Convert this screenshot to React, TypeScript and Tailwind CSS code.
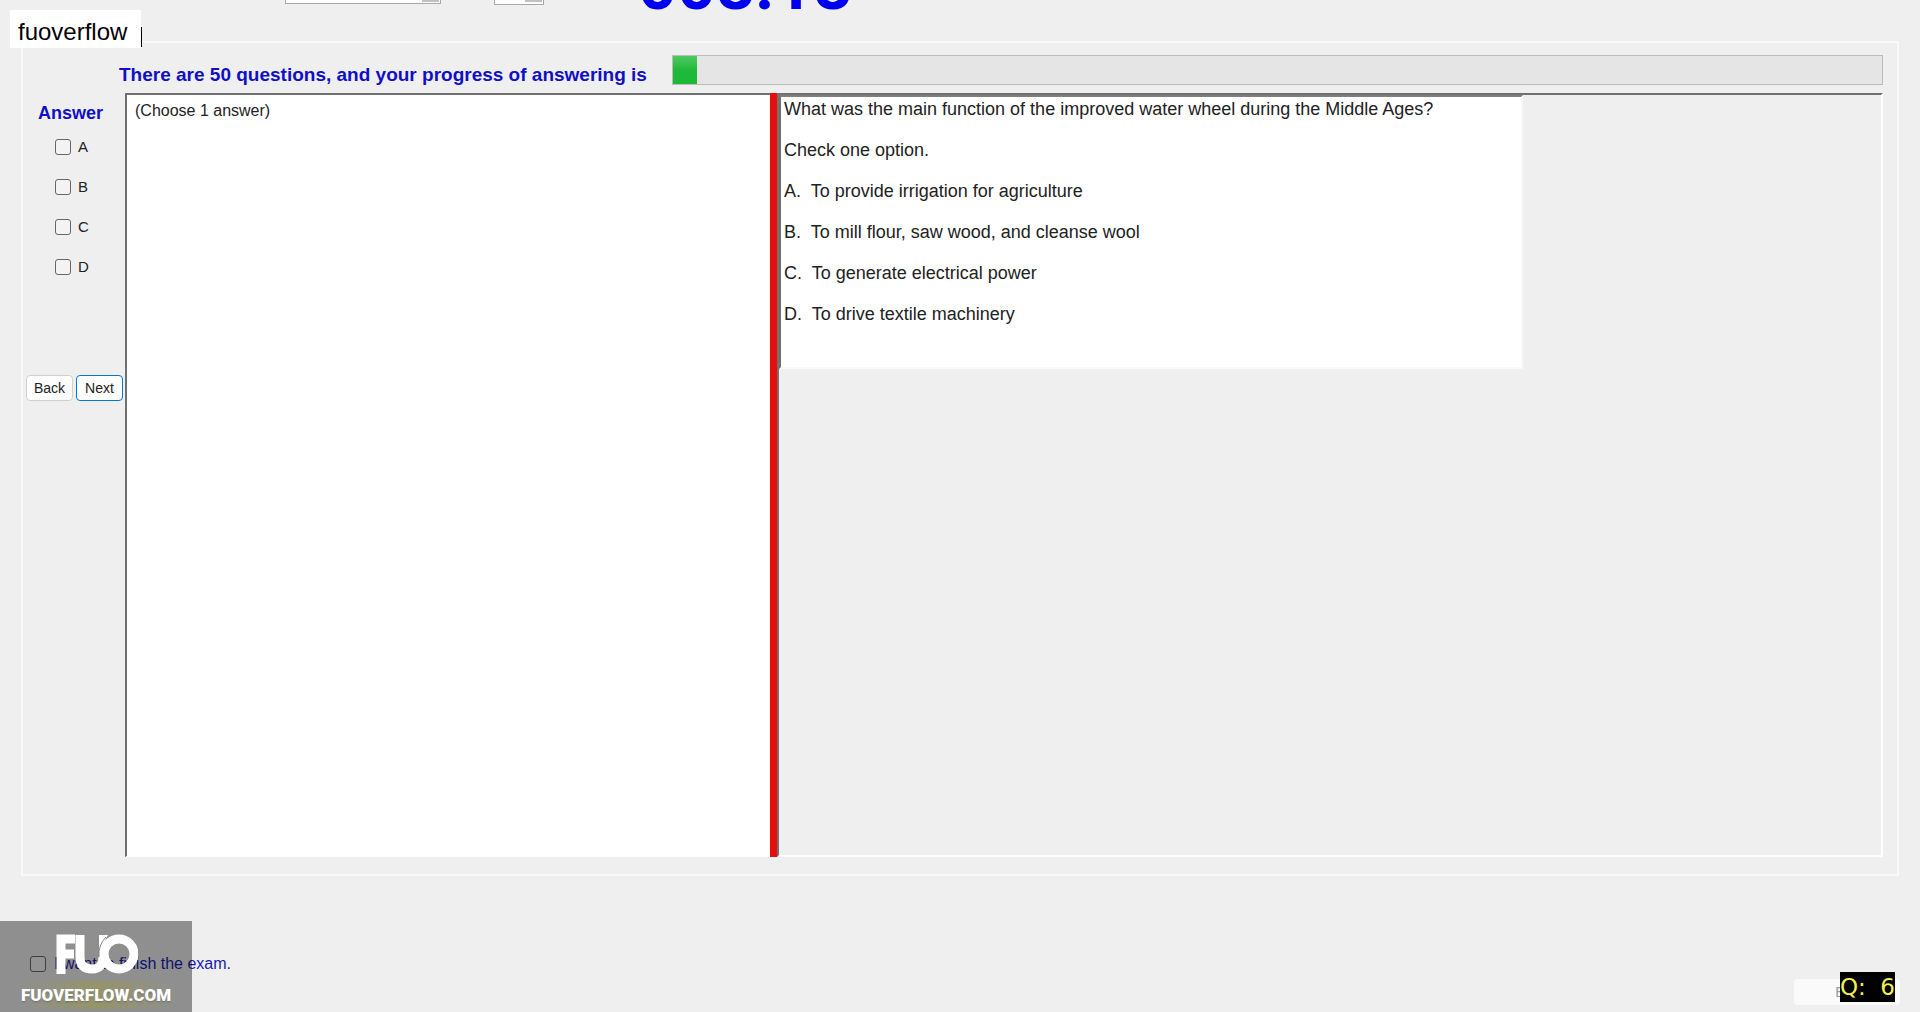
import { useState } from "react";

const options = ["A", "B", "C", "D"];

const questionLines = [
  "What was the main function of the improved water wheel during the Middle Ages?",
  "Check one option.",
  "A.  To provide irrigation for agriculture",
  "B.  To mill flour, saw wood, and cleanse wool",
  "C.  To generate electrical power",
  "D.  To drive textile machinery",
];

function Checkbox({ id, checked, onChange }: { id: string; checked: boolean; onChange: () => void }) {
  return (
    <input
      id={id}
      type="checkbox"
      checked={checked}
      onChange={onChange}
      className="size-4 appearance-none rounded-[3px] border border-[#666] bg-[#f3f3f3] checked:bg-[#0067c0]"
    />
  );
}

function Watermark() {
  return (
    <div className="absolute bottom-0 left-0 flex h-[91px] w-48 flex-col items-center bg-black/40 pt-3 text-white">
      <svg className="h-11 w-[84px]" viewBox="0 0 84 44" fill="none" stroke="#fff" aria-label="FUO">
        <path d="M7 41V6H21M7 21H20" strokeWidth="9" />
        <path d="M26 2V24Q26 36 38 36Q49 36 49 24" strokeWidth="9" />
        <path d="M46 2H54Q50 8 49 16V24H45V2Z" fill="#fff" stroke="none" />
        <circle cx="65" cy="21" r="15" strokeWidth="9" />
        <path d="M52 4Q44 12 45 24" stroke="#888" strokeWidth="1" />
      </svg>
      <div className="mt-1 flex h-7 items-center bg-linear-to-r from-transparent via-[#a09b30]/40 to-transparent">
        <span className="font-['Roboto',sans-serif] text-[17px] leading-6 font-black text-shadow-sm">FUOVERFLOW.COM</span>
      </div>
    </div>
  );
}

export default function App() {
  const [answer, setAnswer] = useState("");
  const [finish, setFinish] = useState(false);

  return (
    <main className="relative flex h-screen flex-col overflow-hidden bg-[#efefef] font-['Liberation_Sans',sans-serif] text-[#222]">
      {/* Top strip, scrolled mostly out of view */}
      <header className="flex h-[41px] shrink-0 items-start pl-[285px]">
        <div className="relative flex">
          <select aria-label="Font" className="h-1 w-[156px] appearance-none border border-t-0 border-[#aaa] bg-white" />
          <span className="absolute top-0 right-0.5 h-0.5 w-[17px] bg-[#c0c0c0]" />
        </div>
        <div className="relative ml-[53px] flex">
          <select aria-label="Size" className="h-[5px] w-[50px] appearance-none border border-t-0 border-[#aaa] bg-white" />
          <span className="absolute top-0 right-0.5 h-0.5 w-[17px] bg-[#c0c0c0]" />
        </div>
        <div className="ml-[94px] flex h-2 items-end">
          <span className="font-['Roboto'] text-[68px] leading-[44px] font-bold text-[#0000f0]">008:18</span>
        </div>
      </header>

      <section className="mr-[21px] ml-[21px] flex h-[835px] shrink-0 flex-col border-2 border-[#f9f9f9] pt-3 pr-3.5">
        <div className="flex h-[38px] items-start">
          <label htmlFor="progress" className="ml-24 w-[553px] pt-2 text-[19px] leading-6 font-bold whitespace-nowrap text-[#0f0fc8]">
            There are 50 questions, and your progress of answering is
          </label>
          <div id="progress" role="progressbar" aria-valuenow={2} className="h-[30px] flex-1 border border-[#bcbcbc] bg-[#e5e5e5]">
            <div className="h-7 w-6 bg-linear-to-b from-[#4cc95f] via-[#1fb93a] to-[#1fb93a]" />
          </div>
        </div>

        <div className="flex h-[764px]">
          <aside className="flex w-[102px] shrink-0 flex-col">
            <h2 className="mt-2 ml-[15px] text-lg leading-6 font-bold text-[#0f0fc8]">Answer</h2>
            <div className="mt-0.5 ml-8 flex flex-col">
              {options.map((o) => (
                <div key={o} className="flex h-10 items-center gap-[7px] text-[15px]">
                  <Checkbox id={o} checked={answer === o} onChange={() => setAnswer(answer === o ? "" : o)} />
                  <label htmlFor={o}>{o}</label>
                </div>
              ))}
            </div>
            <div className="mt-[88px] ml-[3px] flex gap-[3px] text-sm">
              <button className="h-[26px] w-[47px] rounded border border-[#d0d0d0] bg-[#fdfdfd]">Back</button>
              <button className="h-[26px] w-[47px] rounded border border-[#0078d4] bg-[#fdfdfd]">Next</button>
            </div>
          </aside>

          <div className="w-[645px] shrink-0 border-t-2 border-b border-l-2 border-[#707070] border-b-white bg-white px-2 py-1 text-base leading-6">
            (Choose 1 answer)
          </div>
          <div className="w-[7px] shrink-0 bg-[#e80c0c]" />
          <div className="flex-1 border-2 border-t-[#707070] border-r-white border-b-white border-l-[#707070]">
            <div className="h-[274px] w-[744px] border-2 border-t-[#808080] border-r-[#f8f8f8] border-b-[#f8f8f8] border-l-[#707070] bg-white pl-[3px] text-lg">
              {questionLines.map((line) => (
                <p key={line} className="mb-[17px] leading-6 whitespace-pre">{line}</p>
              ))}
            </div>
          </div>
        </div>
      </section>

      <footer className="flex flex-1 items-start justify-between pr-5 pl-[30px]">
        <div className="mt-[76px] flex h-6 items-center gap-2 text-base text-[#1c1cb0]">
          <Checkbox id="finish" checked={finish} onChange={() => setFinish(!finish)} />
          <label htmlFor="finish">I want to finish the exam.</label>
        </div>
        <button className="mb-[7px] h-[26px] w-[106px] self-end rounded bg-[#fafafa] text-sm text-[#999]">Exit</button>
      </footer>

      <div className="absolute top-[10px] left-[10px] flex items-end">
        <span className="h-[38px] w-[131px] bg-white pl-2 text-2xl leading-[44px] text-black">fuoverflow</span>
        <span className="mb-px h-5 w-px bg-black" />
      </div>
      <Watermark />
      <div className="absolute right-[25px] bottom-[10px] bg-black font-['DejaVu_Sans'] text-[23px] leading-[30px] whitespace-pre text-[#f0f050]">Q:  6</div>
    </main>
  );
}
